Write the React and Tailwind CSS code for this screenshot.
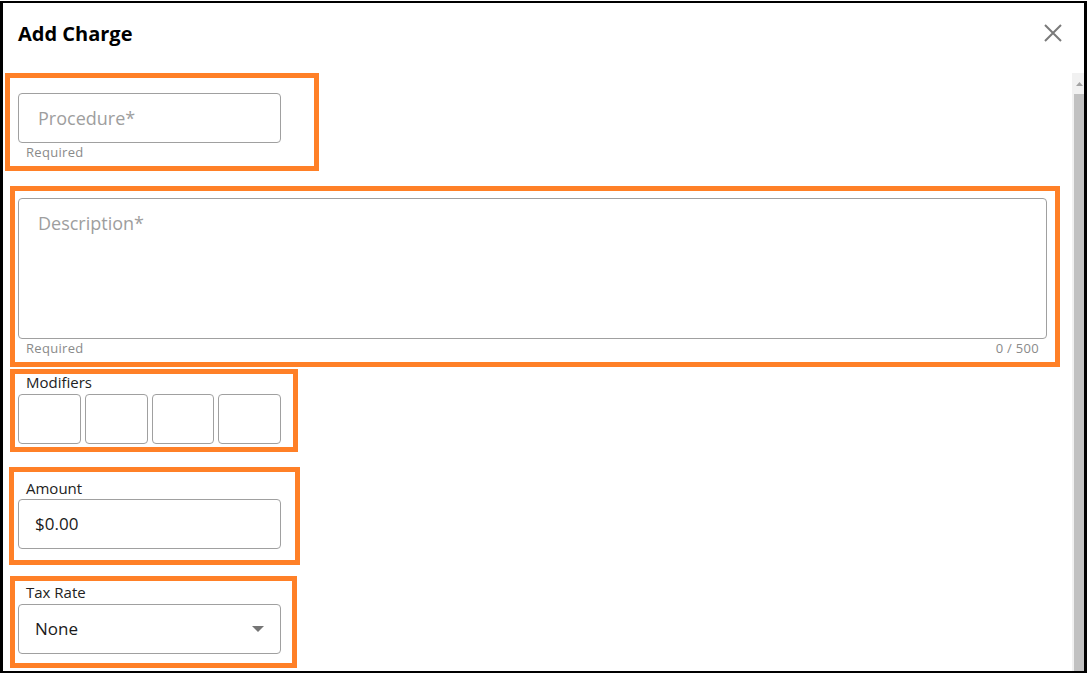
const font = { fontFamily: '"Open Sans", "Noto Sans", sans-serif' }

function Helper({ children, className = '' }) {
  return (
    <div className={`text-[13px] leading-4 tracking-[0.3px] text-[#8a8a8a] ${className}`}>
      {children}
    </div>
  )
}

function Label({ children }) {
  return <div className="text-[15px] leading-4 text-[#222]">{children}</div>
}

export default function App() {
  return (
    <div className="w-[1087px] h-[673px] bg-white pt-px" style={font}>
      <div className="h-[672px] flex flex-col border-t-2 border-b-2 border-l-[3px] border-r-[3px] border-black">
        {/* header */}
        <div className="h-[70px] flex items-start justify-between pt-[17px] pl-[15px] pr-[22px] shrink-0">
          <h2 className="text-[20px] leading-[28px] font-bold text-black">Add Charge</h2>
          <button className="mt-[4px] w-[18px] h-[18px] text-[#7a7a7a]">
            <svg width="18" height="18" viewBox="0 0 18 18" fill="none" stroke="currentColor" strokeWidth="2">
              <path d="M1 1 L17 17 M17 1 L1 17" />
            </svg>
          </button>
        </div>

        {/* body */}
        <div className="flex flex-1 min-h-0">
          <div className="flex-1 flex flex-col overflow-hidden">
            {/* Procedure */}
            <div className="ml-[2px] w-[314px] h-[98px] border-[5px] border-[#ff8027] pl-[8px] pt-[15px] shrink-0">
              <div className="w-[263px] h-[50px] border border-[#a0a0a0] rounded-[4px] flex items-center pl-[19px]">
                <span className="text-[18px] leading-6 text-[#9e9e9e]">Procedure*</span>
              </div>
              <Helper className="mt-px pl-[8px]">Required</Helper>
            </div>

            {/* Description */}
            <div className="ml-[7px] mt-[15px] w-[1050px] h-[181px] border-[5px] border-[#ff8027] pl-[3px] pt-[7px] shrink-0">
              <div className="w-[1029px] h-[141px] border border-[#a0a0a0] rounded-[4px] pl-[19px] pt-[12px]">
                <span className="text-[18px] leading-6 text-[#9e9e9e]">Description*</span>
              </div>
              <div className="w-[1029px] flex justify-between px-[8px] mt-px">
                <Helper>Required</Helper>
                <Helper>0 / 500</Helper>
              </div>
            </div>

            {/* Modifiers */}
            <div className="ml-[7px] mt-[2px] w-[288px] h-[83px] border-[5px] border-[#ff8027] pl-[3px] shrink-0">
              <div className="pl-[8px]">
                <Label>Modifiers</Label>
              </div>
              <div className="mt-[4px] w-[263px] grid grid-cols-4 gap-1">
                <div className="h-[50px] border border-[#a0a0a0] rounded-[4px]" />
                <div className="h-[50px] border border-[#a0a0a0] rounded-[4px]" />
                <div className="h-[50px] border border-[#a0a0a0] rounded-[4px]" />
                <div className="h-[50px] border border-[#a0a0a0] rounded-[4px]" />
              </div>
            </div>

            {/* Amount */}
            <div className="ml-[6px] mt-[15px] w-[291px] h-[98px] border-[5px] border-[#ff8027] pl-[4px] pt-[8px] shrink-0">
              <div className="pl-[8px]">
                <Label>Amount</Label>
              </div>
              <div className="mt-[3px] w-[263px] h-[50px] border border-[#a0a0a0] rounded-[4px] flex items-center pl-[16px]">
                <span className="text-[17px] leading-6 text-[#1a1a1a]">$0.00</span>
              </div>
            </div>

            {/* Tax Rate */}
            <div className="ml-[7px] mt-[11px] w-[287px] h-[92px] border-[5px] border-[#ff8027] pl-[3px] pt-[3px] shrink-0">
              <div className="pl-[8px]">
                <Label>Tax Rate</Label>
              </div>
              <div className="mt-[4px] w-[263px] h-[50px] border border-[#a0a0a0] rounded-[4px] flex items-center justify-between pl-[16px] pr-[16px]">
                <span className="text-[17px] leading-6 text-[#1a1a1a]">None</span>
                <svg width="12" height="6" viewBox="0 0 12 6">
                  <path d="M0 0 L12 0 L6 6 Z" fill="#757575" />
                </svg>
              </div>
            </div>
          </div>

          {/* scrollbar */}
          <div className="w-[12px] bg-[#f1f1f1] flex flex-col shrink-0">
            <div className="h-[21px] flex items-center justify-center pl-[2px]">
              <svg width="7" height="4" viewBox="0 0 7 4">
                <path d="M0 4 L3.5 0 L7 4 Z" fill="#a3a3a3" />
              </svg>
            </div>
            <div className="flex-1 ml-[2px] bg-[#c1c1c1]" />
          </div>
        </div>
      </div>
    </div>
  )
}
